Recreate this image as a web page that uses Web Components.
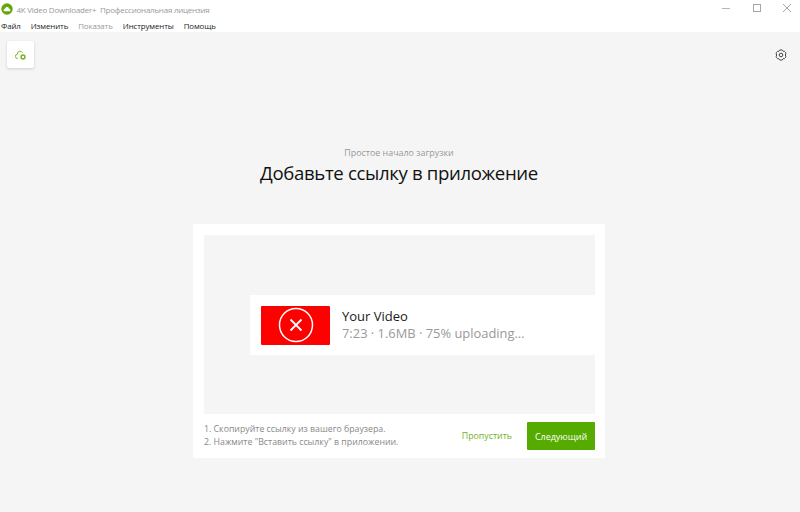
<!DOCTYPE html>
<html><head><meta charset="utf-8">
<style>
html,body{margin:0;height:100%;}
body{font-family:"Open Sans","Noto Sans",sans-serif;}
</style></head>
<body>
<app-window></app-window>
<template id="t-title"><style>
:host{display:flex;align-items:center;height:19px;background:#fff;padding:0 0 0 1px;}
svg{display:block}
.l{margin-top:-1px}
.t{font-size:8px;letter-spacing:-.25px;color:#9a9a9a;margin:-1px 0 0 3.500px;flex:1;white-space:nowrap}
.c{display:flex;align-items:center;justify-content:center;width:30.500px;height:19px;margin-top:-3px}
.c:last-child{margin-right:-2.500px}
</style>
<svg class="l" width="12" height="12" viewBox="0 0 12 12"><circle cx="6" cy="6" r="5.700" fill="#64a70b"/><path d="M2.700 8.200C2.300 6.600 3.400 5.500 4.300 5.500 4.700 3.700 7.400 3.600 7.900 5.400 8.900 5.500 9.700 6.800 9.200 8.200Z" fill="#fff"/></svg>
<span class="t">4K Video Downloader+ &nbsp;Профессиональная лицензия</span>
<span class="c"><svg width="8" height="8" viewBox="0 0 8 8"><path d="M0 4.500H8" stroke="#b5b5b5" fill="none"/></svg></span>
<span class="c"><svg width="8" height="8" viewBox="0 0 8 8"><rect x=".5" y=".5" width="7" height="7" fill="none" stroke="#a5a5a5"/></svg></span>
<span class="c"><svg width="8" height="8" viewBox="0 0 8 8"><path d="M0 0 8 8M8 0 0 8" stroke="#a5a5a5" fill="none"/></svg></span>
</template>
<template id="t-menu"><style>
:host{display:flex;gap:10px;height:13px;background:#fff;padding:0 0 0 1px;font-size:7.900px;letter-spacing:-.12px;line-height:15px;color:#222;}
::slotted(.off){color:#999}
</style><slot></slot></template>
<template id="t-toolbar"><style>
:host{display:flex;justify-content:space-between;align-items:flex-start;padding:9px 13px 0 7px;height:27px}
.b{width:27px;height:27px;background:#fff;border-radius:2px;box-shadow:0 1px 3px rgba(0,0,0,.16);display:flex;align-items:center;justify-content:center}
.g{margin-top:8px;display:block}
</style>
<span class="b"><svg width="12" height="12" viewBox="0 0 12 12" fill="none" stroke="#77b82a"><path d="M3 9.500H2.600A2.100 2.100 0 0 1 2.300 5.300 2.800 2.800 0 0 1 7.600 3.800"/><circle cx="8" cy="8" r="2.700" fill="#77b82a" stroke="none"/><rect x="7" y="7" width="2" height="2" fill="#fff" stroke="none"/></svg></span>
<svg class="g" width="12" height="12" viewBox="0 0 12 12" fill="none" stroke="#444"><path d="M8.150 2.280A2.300 2.300 0 0 1 10.300 6 2.300 2.300 0 0 1 8.150 9.720 2.300 2.300 0 0 1 3.850 9.720 2.300 2.300 0 0 1 1.700 6 2.300 2.300 0 0 1 3.850 2.280 2.300 2.300 0 0 1 8.150 2.280Z"/><circle cx="6" cy="6" r="1.800"/></svg>
</template>
<template id="t-heading"><style>
:host{display:block;text-align:center;margin-top:78px;margin-left:-2px;white-space:nowrap}
.s{font-size:8.900px;line-height:14px;color:#999}
.h{font-size:18.600px;letter-spacing:-.35px;line-height:26px;color:#111}
</style><div class="s"><slot name="sub"></slot></div><div class="h"><slot name="title"></slot></div></template>
<template id="t-video"><style>
:host{display:flex;align-items:center;background:#fff;height:60px;margin-left:46px;padding-left:11px;}
.th{width:69px;height:39px;background:#f00;border-radius:1px;display:flex;align-items:center;justify-content:center}
.m{margin-left:12px;white-space:nowrap}
.a{font-size:13px;line-height:17px;color:#1a1a1a}
.b{font-size:12.900px;line-height:17px;color:#999}
svg{display:block}
</style><span class="th"><svg width="36" height="36" viewBox="0 0 36 36" fill="none" stroke="#fff"><circle cx="18" cy="18" r="16.500" stroke-width="1.500"/><path d="M12.500 12.500 23.500 23.500M23.500 12.500 12.500 23.500" stroke-width="1.800"/></svg></span>
<div class="m"><div class="a"><slot name="title"></slot></div><div class="b"><slot name="meta"></slot></div></div></template>
<template id="t-card"><style>
:host{display:block;width:391px;background:#fff;padding:11px 10px 8px 11px;margin:38px 0 0 193px}
.stage{height:179px;background:#f5f5f5;padding-top:60px;box-sizing:border-box}
.foot{display:flex;align-items:center;margin-top:8px;height:28px}
.steps{flex:1;font-size:8.770px;line-height:13px;color:#888;white-space:nowrap}
.skip{font-size:8.800px;color:#6fb21f;margin-right:15px}
.next{width:68px;height:28px;background:#56ab00;border-radius:1px;color:#fff;font-size:8.950px;display:flex;align-items:center;justify-content:center}
</style><div class="stage"><slot name="video"></slot></div>
<div class="foot"><div class="steps"><slot name="steps"></slot></div><span class="skip">Пропустить</span><span class="next">Следующий</span></div></template>
<script>
const def=(n,id)=>customElements.define(n,class extends HTMLElement{constructor(){super();this.attachShadow({mode:'open'}).append(document.getElementById(id).content.cloneNode(true))}});
[['title-bar','t-title'],['menu-bar','t-menu'],['tool-bar','t-toolbar'],['hero-heading','t-heading'],['video-row','t-video'],['guide-card','t-card']].forEach(a=>def(...a));
customElements.define('app-window',class extends HTMLElement{constructor(){super();const s=this.attachShadow({mode:'open'});s.innerHTML=`<style>:host{display:block;width:800px;height:512px;background:#f5f5f5;overflow:hidden}</style>
<title-bar></title-bar>
<menu-bar><span>Файл</span><span>Изменить</span><span class="off">Показать</span><span>Инструменты</span><span>Помощь</span></menu-bar>
<tool-bar></tool-bar>
<hero-heading><span slot="sub">Простое начало загрузки</span><span slot="title">Добавьте ссылку в приложение</span></hero-heading>
<guide-card><video-row slot="video"><span slot="title">Your Video</span><span slot="meta">7:23 · 1.6MB · 75% uploading...</span></video-row>
<div slot="steps">1. Скопируйте ссылку из вашего браузера.<br>2. Нажмите "Вставить ссылку" в приложении.</div></guide-card>`}});
</script>
</body></html>
